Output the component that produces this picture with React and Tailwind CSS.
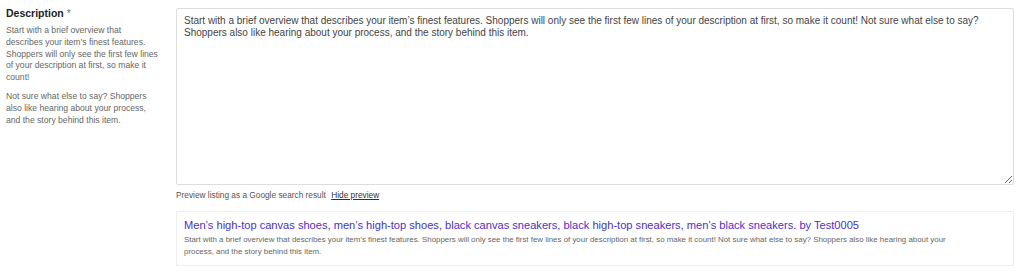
const helper1 = [
  'Start with a brief overview that',
  'describes your item\u2019s finest features.',
  'Shoppers will only see the first few lines',
  'of your description at first, so make it',
  'count!',
]
const helper2 = ['Not sure what else to say? Shoppers', 'also like hearing about your process,', 'and the story behind this item.']
const fullText =
  'Start with a brief overview that describes your item\u2019s finest features. Shoppers will only see the first few lines of your description at first, so make it count! Not sure what else to say? Shoppers also like hearing about your process, and the story behind this item.'

export default function App() {
  return (
    <div className="w-[1024px] h-[272px] bg-white font-['Liberation_Sans',Arial,sans-serif] text-[#222] flex pt-2">
      {/* Left label column */}
      <div className="w-[176px] flex-shrink-0 pl-[6px] pr-[10px]">
        <div className="text-[10.5px] leading-[10px] font-bold text-[#222]">
          Description <span className="font-normal text-[#777]">*</span>
        </div>
        <p className="mt-[7px] text-[8.6px] leading-[11.8px] text-[#666] whitespace-nowrap">
          {helper1.map((l, i) => (
            <span key={i} className="block">{l}</span>
          ))}
        </p>
        <p className="mt-[7px] text-[8.6px] leading-[11.8px] text-[#666] whitespace-nowrap">
          {helper2.map((l, i) => (
            <span key={i} className="block">{l}</span>
          ))}
        </p>
      </div>

      {/* Right field column */}
      <div className="w-[838px] flex flex-col">
        <textarea
          readOnly
          value={fullText}
          className="w-full h-[177px] block border border-[#ddd] rounded-[2px] px-[7px] py-[6px] text-[10px] leading-[12px] text-[#444] bg-white outline-none font-['Liberation_Sans',Arial,sans-serif]"
        />
        <div className="mt-[4px] text-[8.3px] leading-[12px] text-[#555]">
          Preview listing as a Google search result{' '}
          <a className="ml-[3px] underline text-[#333] cursor-pointer">Hide preview</a>
        </div>
        <div className="mt-[10px] border border-[#eee] px-[7px] pt-[6px] pb-[7px] font-['Liberation_Sans',Arial,sans-serif]">
          <div className="text-[11.1px] leading-[14px] text-[#4a2fcc]">
            Men&rsquo;s high-top canvas shoes, men&rsquo;s high-top shoes, black canvas sneakers, black high-top sneakers, men&rsquo;s black sneakers. by Test0005
          </div>
          <div className="text-[7.9px] leading-[12px] text-[#666] mt-[2px] pr-[50px]">{fullText}</div>
        </div>
      </div>
    </div>
  )
}
